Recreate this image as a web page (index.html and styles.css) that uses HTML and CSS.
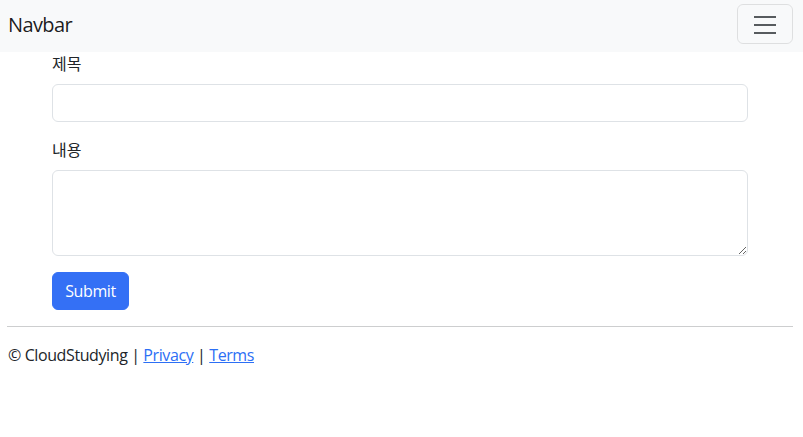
FILE: index.html
```html
<!DOCTYPE html>
<html lang="ko">
<head>
<meta charset="utf-8">
<title>Navbar</title>
<link rel="stylesheet" href="styles.css">
</head>
<body>
<nav class="navbar">
  <a class="brand" href="#">Navbar</a>
  <button class="toggler" type="button" aria-label="Toggle navigation">
    <svg class="toggler-icon" width="30" height="30" viewBox="0 0 30 30" aria-hidden="true">
      <path d="M4 8h22M4 16h22M4 24h22" stroke="rgba(33,37,41,0.75)" stroke-width="2" stroke-linecap="butt" fill="none"/>
    </svg>
  </button>
</nav>
<main class="container">
  <form class="post-form">
    <div class="field">
      <label class="form-label" for="title">제목</label>
      <input class="form-control" id="title" type="text">
    </div>
    <div class="field">
      <label class="form-label" for="content">내용</label>
      <textarea class="form-control textarea" id="content" rows="3"></textarea>
    </div>
    <button class="btn-primary" type="submit">Submit</button>
  </form>
</main>
<footer class="footer">
  <hr class="rule">
  <p class="footer-text">© CloudStudying | <a href="#">Privacy</a> | <a href="#">Terms</a></p>
</footer>
</body>
</html>
```
FILE: styles.css
```css
* { box-sizing: border-box; }
html, body { margin: 0; padding: 0; }
body {
  font-family: "Open Sans", "Noto Sans CJK KR", sans-serif;
  font-size: 16px;
  line-height: 24px;
  letter-spacing: -0.025em;
  color: #212529;
  background: #fff;
}
.navbar {
  height: 52px;
  background: #f8f9fa;
  display: flex;
  justify-content: space-between;
  align-items: flex-start;
  padding: 0 10px 0 8px;
}
.brand {
  font-size: 20px;
  line-height: 30px;
  margin-top: 10px;
  letter-spacing: -0.03em;
  color: rgba(0,0,0,0.9);
  text-decoration: none;
}
.toggler {
  margin-top: 4px;
  width: 56px;
  height: 40px;
  padding: 0;
  display: flex;
  align-items: center;
  justify-content: center;
  background: transparent;
  border: 1px solid rgba(0,0,0,0.1);
  border-radius: 6px;
}
.toggler-icon { display: block; }
.container {
  padding: 0 55px 0 52px;
}
.field { margin-bottom: 16px; }
.form-label {
  display: block;
  margin-bottom: 8px;
  line-height: 22px;
  padding-bottom: 2px;
  letter-spacing: 0;
  font-family: "Noto Sans CJK KR", sans-serif;
}
.form-control {
  display: block;
  width: 100%;
  height: 38px;
  padding: 6px 12px;
  font: inherit;
  border: 1px solid #dee2e6;
  border-radius: 6px;
  background: #fff;
}
.textarea {
  height: 86px;
  resize: vertical;
}
.btn-primary {
  display: block;
  height: 38px;
  width: 77px;
  padding: 0;
  font: inherit;
  letter-spacing: -0.025em;
  color: #fff;
  background: #3470f5;
  border: 1px solid #3470f5;
  border-radius: 6px;
}
.footer {
  padding: 0 10px 0 7px;
  margin-top: 16px;
}
.rule {
  margin: 0;
  border: 0;
  border-top: 1px solid #cdcecf;
}
.footer-text {
  margin: 16px 0 0 1px;
}
.footer-text a { color: #2c6ff5; }
```
